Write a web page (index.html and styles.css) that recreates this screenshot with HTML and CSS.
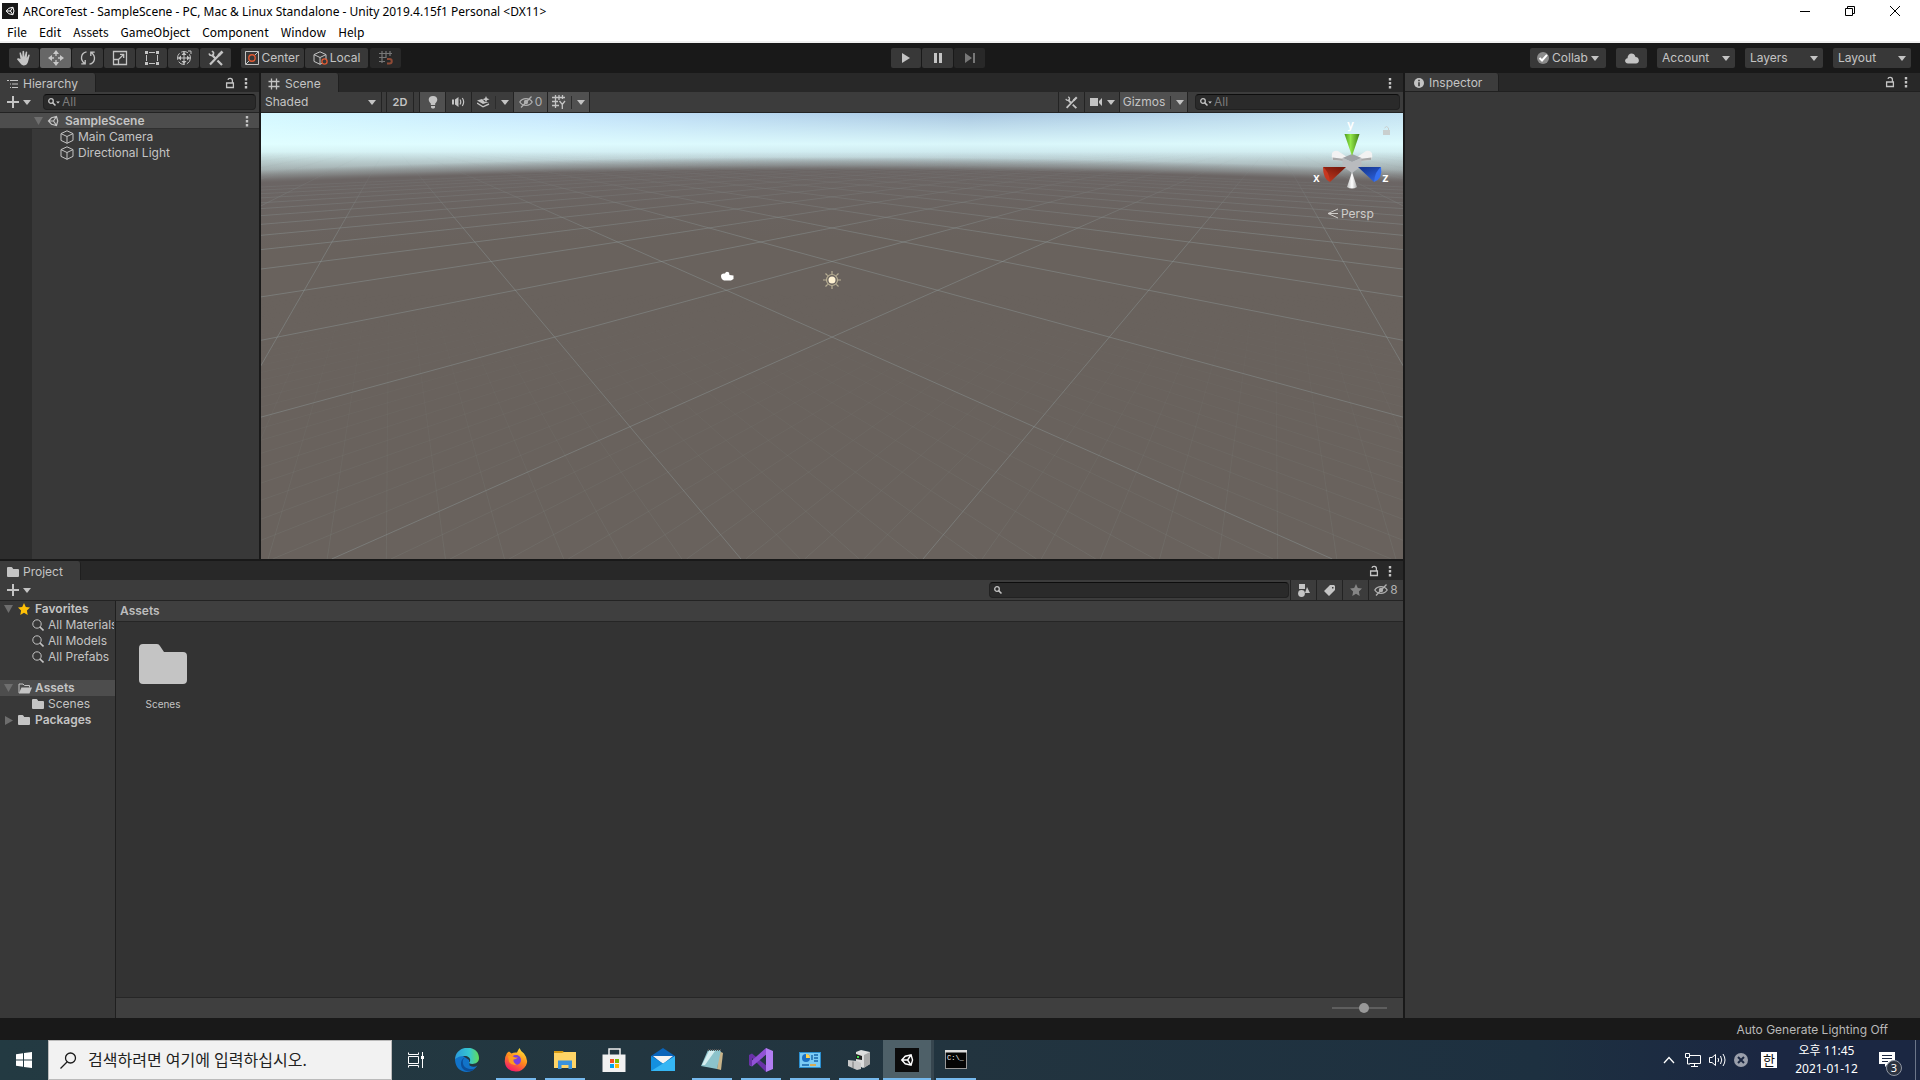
FILE: index.html
```html
<!DOCTYPE html>
<html lang="ko">
<head>
	<meta charset="UTF-8">
	<title>ARCoreTest - SampleScene</title>
	<link rel="stylesheet" href="styles.css">
</head>
<body>

	<!-- shared icons -->
	<svg class="defs" width="0" height="0">
		<symbol id="unity" viewBox="0 0 24 24"><path fill="none" stroke="currentColor" stroke-width="2.4" d="M3 12 L9 5.5 L19 3 L21.5 12 L19 21 L9 18.500 Z M3 12 H13 M13 12 L19 3 M13 12 L19 21"/></symbol>
		<symbol id="cube" viewBox="0 0 14 14"><path fill="none" stroke="currentColor" d="M7 .8 L13 3.600 V10.400 L7 13.300 L1 10.400 V3.600 Z M1 3.600 L7 6.500 L13 3.600 M7 6.500 V13.300"/></symbol>
		<symbol id="lock" viewBox="0 0 10 12"><path fill="none" stroke="currentColor" stroke-width="1.300" d="M1.600 6 H8.400 V10.500 H1.600 Z M7.400 6 V3.500 C7.400 .9 3.300 .9 3 2.800"/></symbol>
		<symbol id="kebab" viewBox="0 0 4 12"><path fill="currentColor" d="M.8 1h2.400v2.400H.8z M.8 5h2.400v2.400H.8z M.8 9h2.400v2.400H.8z"/></symbol>
		<symbol id="down" viewBox="0 0 8 5"><path fill="currentColor" d="M0 0 H8 L4 5 Z"/></symbol>
		<symbol id="plus" viewBox="0 0 12 12"><path fill="none" stroke="currentColor" stroke-width="2" d="M6 0 V12 M0 6 H12"/></symbol>
		<symbol id="find" viewBox="0 0 10 10"><circle cx="4" cy="4" r="2.300" fill="none" stroke="currentColor" stroke-width="1.300"/><path stroke="currentColor" stroke-width="1.500" d="M5.600 5.600 L8.500 8.500"/></symbol>
		<symbol id="query" viewBox="0 0 12 12"><circle cx="5" cy="5" r="4.200" fill="none" stroke="currentColor"/><path stroke="currentColor" stroke-width="1.600" d="M8 8 L11.500 11.500"/></symbol>
		<symbol id="folder" viewBox="0 0 48 40"><path fill="currentColor" d="M0 4 Q0 0 4 0 H18 Q20 0 21 2 L25 8 H44 Q48 8 48 12 V36 Q48 40 44 40 H4 Q0 40 0 36 Z"/></symbol>
		<symbol id="folder-open" viewBox="0 0 14 11"><path fill="none" stroke="currentColor" d="M1 10 V1 H5 L6.500 2.500 H11.500 V4.500"/><path fill="currentColor" d="M3.500 4.500 H14 L11.500 10.500 H.8 Z"/></symbol>
		<symbol id="star" viewBox="0 0 12 12"><path fill="currentColor" d="M6 0 L7.800 4 L12 4.500 L8.900 7.500 L9.700 12 L6 9.700 L2.300 12 L3.100 7.500 L0 4.500 L4.200 4 Z"/></symbol>
		<symbol id="eye-off" viewBox="0 0 14 12"><path fill="none" stroke="currentColor" stroke-width="1.300" d="M.8 6 C3.500 1.500 10.500 1.500 13.200 6 C10.500 10.500 3.500 10.500 .8 6 Z M12.500 .5 L2 11.500"/><circle cx="7" cy="6" r="2.200" fill="currentColor"/></symbol>
		<symbol id="tools" viewBox="0 0 16 16"><path fill="none" stroke="currentColor" stroke-width="2.200" d="M4 5 L7 8 M9.500 10.500 L14 15 M2 14.500 L12 4"/><path fill="none" stroke="currentColor" stroke-width="1.600" d="M1 3.500 C2 6.500 6 6 5.500 2.500 L4 1"/><path stroke="currentColor" stroke-width="2.600" d="M10.500 5.500 L14.500 1.500"/></symbol>
		<symbol id="hash" viewBox="0 0 12 12"><path fill="none" stroke="currentColor" stroke-width="1.300" d="M3.500 .5 V11.500 M8.500 .5 V11.500 M.5 3.500 H11.500 M.5 8.500 H11.500"/></symbol>
	</svg>

	<header class="titlebar">
		<svg class="app-icon" width="16" height="16" viewBox="0 0 16 16"><rect width="16" height="16" fill="#181818"/><use href="#unity" x="3" y="3" width="10" height="10"/></svg>
		<span class="title">ARCoreTest - SampleScene - PC, Mac &amp; Linux Standalone - Unity 2019.4.15f1 Personal &lt;DX11&gt;</span>
		<div class="window-buttons">
			<button aria-label="Minimize"><svg width="10" height="10"><path stroke="#000" d="M0 5.500 H10"/></svg></button>
			<button aria-label="Restore"><svg width="10" height="10"><path fill="none" stroke="#000" d="M.5 2.500 H7.500 V9.500 H.5 Z M2.500 2.500 V.5 H9.500 V7.500 H7.500"/></svg></button>
			<button aria-label="Close"><svg width="10" height="10"><path stroke="#000" d="M0 0 L10 10 M10 0 L0 10"/></svg></button>
		</div>
	</header>

	<nav class="menubar">
		<a href="#">File</a>
		<a href="#">Edit</a>
		<a href="#">Assets</a>
		<a href="#">GameObject</a>
		<a href="#">Component</a>
		<a href="#">Window</a>
		<a href="#">Help</a>
	</nav>

	<div class="main-toolbar">
		<div class="tool-left">
			<div class="button-strip">
				<button class="tool" aria-label="Hand"><svg width="16" height="16" viewBox="0 0 16 16"><path fill="#c4c4c4" d="M4.500 9 L3.500 3 Q4.200 1.500 5 3 L6.300 7 L6.500 1.300 Q7.300 .2 8.100 1.300 L8.500 7 L9.800 1.800 Q10.700 1 11.200 2.100 L10.800 8 L12.500 4.600 Q13.600 4 13.700 5.200 L12 12 Q10.800 15.500 7.500 15.500 Q5.500 15 4.300 13.300 L1 9.300 Q1.300 8 2.500 8.300 Z"/></svg></button>
				<button class="tool active" aria-label="Move"><svg width="16" height="16" viewBox="0 0 16 16"><path fill="none" stroke="#c8c8c8" stroke-width="1.300" d="M8 3 V6 M8 10 V13 M3 8 H6 M10 8 H13"/><path fill="#c8c8c8" d="M8 0 L11 4 H5 Z M8 16 L11 12 H5 Z M0 8 L4 5 V11 Z M16 8 L12 5 V11 Z"/></svg></button>
				<button class="tool" aria-label="Rotate"><svg width="16" height="16" viewBox="0 0 16 16"><path fill="none" stroke="#c4c4c4" stroke-width="1.300" d="M6.500 1.800 C.8 3 -.2 9.500 4.500 13.500 M1.300 13.800 H5.200 V10 M9.500 14.200 C15.200 13 16.200 6.500 11.500 2.500 M14.700 2.200 H10.800 V6"/></svg></button>
				<button class="tool" aria-label="Scale"><svg width="16" height="16" viewBox="0 0 16 16"><path fill="none" stroke="#c4c4c4" stroke-width="1.300" d="M1.500 1.500 H14.500 V14.500 H1.500 Z M1.500 9.500 H6.500 V14.500 M6.500 9.500 L11.500 4.500 M8 4.300 H11.700 V8"/></svg></button>
				<button class="tool" aria-label="Rect"><svg width="16" height="16" viewBox="0 0 16 16"><path fill="none" stroke="#c4c4c4" d="M5 2.500 H11 M5 13.500 H11 M2.500 5 V11 M13.500 5 V11"/><path fill="#c4c4c4" d="M1 1h3v3H1z M12 1h3v3h-3z M1 12h3v3H1z M12 12h3v3h-3z"/></svg></button>
				<button class="tool" aria-label="Transform"><svg width="16" height="16" viewBox="0 0 16 16"><circle cx="8" cy="8" r="6.500" fill="none" stroke="#c4c4c4" stroke-dasharray="7 2"/><path fill="none" stroke="#c4c4c4" d="M8 2 V14 M2 8 H14 M12 1 H15 V4"/><path fill="#c4c4c4" d="M8 2 L10.500 5 H5.500 Z M8 14 L10.500 11 H5.500 Z M2 8 L5 5.500 V10.500 Z M14 8 L11 5.500 V10.500 Z"/></svg></button>
				<button class="tool" aria-label="Custom tools"><svg width="16" height="16"><use href="#tools"/></svg></button>
			</div>
			<div class="button-strip">
				<button class="pivot"><svg width="14" height="14" viewBox="0 0 14 14"><path fill="none" stroke="#c4c4c4" d="M.5 .5 H13.500 V13.500 H.5 Z M1 13 L4.500 9.500 M9.500 4.500 L13 1"/><circle cx="7" cy="7" r="3.200" fill="none" stroke="#e05a33" stroke-width="1.400"/></svg>Center</button>
				<button class="pivot"><svg width="15" height="14" viewBox="0 0 15 14"><use href="#cube" width="14" height="14"/><circle cx="11.500" cy="10.500" r="2.600" fill="#383838" stroke="#e05a33" stroke-width="1.300"/></svg>Local</button>
			</div>
			<button class="tool disabled" aria-label="Grid snapping"><svg width="14" height="14" viewBox="0 0 14 14"><path fill="none" stroke="#777" stroke-width="1.200" d="M3 0 V12 M7 0 V7 M11 0 V5 M0 2.500 H13 M0 6.500 H7 M0 10.500 H6"/><path fill="none" stroke="#8f4a35" stroke-width="2" d="M8 8 H10.500 C13.500 8 13.500 12.500 10.500 12.500 H8"/></svg></button>
		</div>
		<div class="button-strip">
			<button class="tool" aria-label="Play"><svg width="10" height="10"><path fill="#c4c4c4" d="M1 0 L9 5 L1 10 Z"/></svg></button>
			<button class="tool" aria-label="Pause"><svg width="10" height="10"><path fill="#c4c4c4" d="M1 0h3v10H1z M6 0h3v10H6z"/></svg></button>
			<button class="tool disabled" aria-label="Step" disabled><svg width="10" height="10"><path fill="#777" d="M0 0 L7 5 L0 10 Z M8 0h2v10H8z"/></svg></button>
		</div>
		<div class="tool-right">
			<button class="collab"><svg width="12" height="12" viewBox="0 0 12 12"><circle cx="6" cy="6" r="6" fill="#8a8a8a"/><path fill="none" stroke="#fff" stroke-width="2" d="M2.500 6 L5 8.500 L10 2.800"/></svg>Collab<svg class="arrow" width="8" height="5"><use href="#down"/></svg></button>
			<button class="tool" aria-label="Services"><svg width="14" height="11" viewBox="0 0 14 11"><path fill="#c4c4c4" d="M3 10.500 C-.8 10.500 -.8 5.500 2.500 5.200 C2.500 -.6 9.500 -1 10.500 4 C14.800 4 15 10.500 11 10.500 Z"/></svg></button>
			<span class="select-wrap"><select aria-label="Account"><option>Account</option></select></span>
			<span class="select-wrap"><select aria-label="Layers"><option>Layers</option></select></span>
			<span class="select-wrap"><select aria-label="Layout"><option>Layout</option></select></span>
		</div>
	</div>

	<main class="workspace">
		<div class="docks">
			<div class="top-row">

				<section class="panel hierarchy">
					<div class="tabbar">
						<div class="tab hierarchy-tab"><svg width="12" height="10" viewBox="0 0 12 10"><path fill="none" stroke="currentColor" stroke-width="1.200" d="M0 1.500 H2 M3 1.500 H11 M3 5 H4 M5 5 H11 M3 8.500 H4 M5 8.500 H11"/></svg>Hierarchy</div>
						<div class="tab-tools">
							<svg width="10" height="12"><use href="#lock"/></svg>
							<svg width="4" height="12"><use href="#kebab"/></svg>
						</div>
					</div>
					<div class="bar">
						<button class="add" aria-label="Create"><svg width="12" height="12"><use href="#plus"/></svg><svg width="8" height="5"><use href="#down"/></svg></button>
						<label class="search hierarchy-search"><svg width="10" height="10"><use href="#find"/></svg><svg class="mini" width="4" height="3" viewBox="0 0 8 5"><use href="#down"/></svg><input type="text" placeholder="All" aria-label="Search hierarchy"></label>
					</div>
					<div class="scene-row">
						<svg class="fold" width="9" height="8"><path fill="#6e6e6e" d="M0 0 H9 L4.500 8 Z"/></svg>
						<svg width="12" height="12"><use href="#unity"/></svg>
						<b>SampleScene</b>
						<svg class="row-menu" width="4" height="12"><use href="#kebab"/></svg>
					</div>
					<ul class="objects">
						<li><svg width="14" height="14"><use href="#cube"/></svg>Main Camera</li>
						<li><svg width="14" height="14"><use href="#cube"/></svg>Directional Light</li>
					</ul>
				</section>

				<section class="panel scene">
					<div class="tabbar">
						<div class="tab scene-tab"><svg width="12" height="12"><use href="#hash"/></svg>Scene</div>
						<div class="tab-tools"><svg width="4" height="12"><use href="#kebab"/></svg></div>
					</div>
					<div class="bar scene-bar">
						<span class="select-wrap shading"><select aria-label="Shading mode"><option>Shaded</option></select></span>
						<button class="cell two-d">2D</button>
						<button class="cell on first" aria-label="Lighting"><svg width="10" height="13" viewBox="0 0 10 13"><path fill="currentColor" d="M5 0 C0 0 -.5 5 2.800 7.500 V9 H7.200 V7.500 C10.500 5 10 0 5 0 Z M3 10 H7 V11.500 L6 12.500 H4 L3 11.500 Z"/></svg></button>
						<button class="cell" aria-label="Audio"><svg width="13" height="10" viewBox="0 0 13 10"><path fill="currentColor" d="M0 2.500h2v5H0z M3 2.500 L6.500 0 V10 L3 7.500 Z"/><path fill="none" stroke="currentColor" stroke-width="1.200" d="M8 2.500 Q9.500 5 8 7.500 M10.300 1 Q13 5 10.300 9"/></svg></button>
						<button class="cell split" aria-label="Effects"><svg width="13" height="12" viewBox="0 0 13 12"><path fill="currentColor" d="M0 4.500 L5 3 L8 6 H12 L6 8 Z M9 0 L10 2.300 L12.500 3.300 L10 4.300 L9 6.500 L8 4.300 L5.500 3.300 L8 2.300 Z"/><path fill="none" stroke="currentColor" stroke-width="1.400" d="M0 7 L6 10.800 L12 8"/></svg><svg class="arrow" width="8" height="5"><use href="#down"/></svg></button>
						<button class="cell on hidden-count"><svg width="14" height="12"><use href="#eye-off"/></svg>0</button>
						<button class="cell on split" aria-label="Grid"><svg width="14" height="14" viewBox="0 0 14 14"><path fill="none" stroke="currentColor" stroke-width="1.300" d="M3.500 0 V13 M7 0 V5 M10.500 0 V4 M0 2.500 H13 M0 6.500 H6 M0 10.500 H7 M7.500 6 L10.300 9.500 L13 6 M10.300 9.500 V14"/></svg><svg class="arrow" width="8" height="5"><use href="#down"/></svg></button>
						<span class="push"></span>
						<button class="cell" aria-label="Component tools"><svg width="13" height="13" viewBox="0 0 16 16"><use href="#tools"/></svg></button>
						<button class="cell camera" aria-label="Scene camera"><svg width="12" height="8" viewBox="0 0 12 8"><path fill="currentColor" d="M0 0h8v8H0z M9 3 L12 0 V8 L9 5 Z"/></svg><svg width="8" height="5"><use href="#down"/></svg></button>
						<button class="cell on split gizmos">Gizmos<svg class="arrow" width="8" height="5"><use href="#down"/></svg></button>
						<label class="search scene-search"><svg width="10" height="10"><use href="#find"/></svg><svg class="mini" width="4" height="3" viewBox="0 0 8 5"><use href="#down"/></svg><input type="text" placeholder="All" aria-label="Search scene"></label>
					</div>
					<div class="viewport">
						<svg class="grid" viewBox="0 0 1142 446" preserveAspectRatio="xMidYMid slice">
							<defs>
								<linearGradient id="farFade" x1="0" y1="0" x2="0" y2="446" gradientUnits="userSpaceOnUse">
									<stop offset="0.09" stop-color="#000"/>
									<stop offset="0.15" stop-color="#444"/>
									<stop offset="0.28" stop-color="#fff"/>
								</linearGradient>
								<linearGradient id="nearFade" x1="0" y1="0" x2="0" y2="446" gradientUnits="userSpaceOnUse">
									<stop offset="0.4" stop-color="#000"/>
									<stop offset="1" stop-color="#fff"/>
								</linearGradient>
								<mask id="majorMask"><rect width="1142" height="446" fill="url(#farFade)"/></mask>
								<mask id="minorMask"><rect width="1142" height="446" fill="url(#nearFade)"/></mask>
							</defs>
							<g mask="url(#minorMask)"><path id="minorLines" fill="none" stroke="#8b9490" stroke-opacity=".18"/></g>
							<g mask="url(#majorMask)"><path id="majorLines" fill="none" stroke="#8e9898" stroke-opacity=".45"/></g>
							<!-- camera and light gizmos -->
							<path fill="#fff" d="M460 163 Q460 160 464 160.500 Q465 157.500 468 159.500 L468.500 162 L472.500 162.500 V166 L470 167.500 H463 Q460 166 460 163 Z"/>
							<g stroke="#b9b095" stroke-width="1.200" fill="none">
								<circle cx="571" cy="167" r="5.500"/>
								<path d="M571 158 V161 M571 173 V176 M562 167 H565 M577 167 H580 M564.500 160.500 L566.700 162.700 M575.300 171.300 L577.500 173.500 M564.500 173.500 L566.700 171.300 M575.300 162.700 L577.500 160.500"/>
							</g>
							<circle cx="571" cy="167" r="3.500" fill="#fff2d2"/>
						</svg>
						<svg class="orient" width="90" height="114" viewBox="0 -4 90 114">
							<defs>
								<linearGradient id="gy"><stop offset="0" stop-color="#4d9a1e"/><stop offset=".4" stop-color="#92e84a"/><stop offset="1" stop-color="#3f8016"/></linearGradient>
								<linearGradient id="gx" x1="0" y1="1" x2=".6" y2="0"><stop offset="0" stop-color="#c83a20"/><stop offset="1" stop-color="#7b1a0c"/></linearGradient>
								<linearGradient id="gz" x1="1" y1="1" x2=".4" y2="0"><stop offset="0" stop-color="#2f68e8"/><stop offset="1" stop-color="#173a96"/></linearGradient>
								<linearGradient id="gw"><stop offset="0" stop-color="#bbb"/><stop offset=".5" stop-color="#fff"/><stop offset="1" stop-color="#aaa"/></linearGradient>
							</defs>
							<path fill="#f2f2f2" d="M19 34 Q21 31 25 32 L34 38 L30 42 L20 41 Q18 38 19 34 Z M59 34 Q57 31 53 32 L44 38 L48 42 L58 41 Q60 38 59 34 Z"/>
							<path fill="#a8a8a8" d="M20 41 L19.500 38.500 L32 40 L30 42 Z M58 41 L58.500 38.500 L46 40 L48 42 Z"/>
							<path fill="#9da0a4" d="M39 35 L48.500 39 L39 43 L29.500 39 Z"/>
							<path fill="#b9bbbe" d="M29.500 39 L39 43 L48.500 39 V47 L39 54 L29.500 47 Z"/>
							<path fill="url(#gy)" d="M31.500 15 H46.500 L39 37 Z"/>
							<path fill="url(#gx)" d="M10 48 H33 L17 63 Z"/><path fill="#c8371f" d="M10 48 Q16 52 17 63 Q10 60 10 48 Z"/>
							<path fill="url(#gz)" d="M68 48 H45 L61 63 Z"/><path fill="#3470f0" d="M68 48 Q62 52 61 63 Q70 60 68 48 Z"/>
							<path fill="url(#gw)" d="M39 53 L44 68 Q39 71 34 68 Z"/>
							<text x="34" y="10">y</text>
							<text x="0" y="63">x</text>
							<text x="69" y="63">z</text>
							<path fill="#c9cfce" d="M70 11 H77 V16 H70 Z"/><path fill="none" stroke="#c9cfce" d="M75.500 11 V9 Q73.500 6 71.500 9"/>
							<path fill="none" stroke="#cfcdca" d="M25 90 L15 94.500 L25 99 M15 94.500 H25"/>
							<text class="persp" x="28" y="99">Persp</text>
						</svg>
					</div>
				</section>
			</div>

			<section class="panel project">
				<div class="tabbar">
					<div class="tab project-tab"><svg width="12" height="10"><use href="#folder"/></svg>Project</div>
					<div class="tab-tools">
						<svg width="10" height="12"><use href="#lock"/></svg>
						<svg width="4" height="12"><use href="#kebab"/></svg>
					</div>
				</div>
				<div class="bar">
					<button class="add" aria-label="Create"><svg width="12" height="12"><use href="#plus"/></svg><svg width="8" height="5"><use href="#down"/></svg></button>
					<span class="push"></span>
					<label class="search project-search"><svg width="10" height="10"><use href="#find"/></svg><input type="text" aria-label="Search project"></label>
					<button class="cell first" aria-label="Search by type"><svg width="12" height="13" viewBox="0 0 12 13"><path fill="currentColor" d="M1 0h6v5H1z M9 3 L12 9 H7 Z"/><circle cx="3.500" cy="9.500" r="3.400" fill="currentColor"/></svg></button>
					<button class="cell" aria-label="Search by label"><svg width="11" height="11" viewBox="0 0 11 11"><path fill="currentColor" fill-rule="evenodd" d="M6 0 H10 L11 1 V5 L5 11 L0 6 Z M8 2 V3.500 H9.500 V2 Z"/></svg></button>
					<button class="cell dim" aria-label="Save search"><svg width="12" height="12"><use href="#star"/></svg></button>
					<button class="cell hidden-count"><svg width="14" height="12"><use href="#eye-off"/></svg>8</button>
				</div>
				<div class="project-body">
					<ul class="tree">
						<li class="root"><svg class="fold" width="9" height="8"><path fill="#6e6e6e" d="M0 0 H9 L4.500 8 Z"/></svg><svg class="gold" width="12" height="12"><use href="#star"/></svg><b>Favorites</b></li>
						<li class="child"><svg width="12" height="12"><use href="#query"/></svg>All Materials</li>
						<li class="child"><svg width="12" height="12"><use href="#query"/></svg>All Models</li>
						<li class="child"><svg width="12" height="12"><use href="#query"/></svg>All Prefabs</li>
						<li class="root selected"><svg class="fold" width="9" height="8"><path fill="#6e6e6e" d="M0 0 H9 L4.500 8 Z"/></svg><svg width="14" height="11"><use href="#folder-open"/></svg><b>Assets</b></li>
						<li class="child"><svg width="12" height="10"><use href="#folder"/></svg>Scenes</li>
						<li class="root"><svg class="fold" width="9" height="9"><path fill="#6e6e6e" d="M1 0 L9 4.500 L1 9 Z"/></svg><svg width="12" height="10"><use href="#folder"/></svg><b>Packages</b></li>
					</ul>
					<div class="assets">
						<div class="breadcrumb">Assets</div>
						<div class="asset-grid">
							<figure>
								<svg width="48" height="40"><use href="#folder"/></svg>
								<figcaption>Scenes</figcaption>
							</figure>
						</div>
						<div class="asset-footer"><input type="range" min="0" max="100" value="60" aria-label="Icon size"></div>
					</div>
				</div>
			</section>
		</div>

		<section class="panel inspector">
			<div class="tabbar">
				<div class="tab inspector-tab"><svg width="10" height="10" viewBox="0 0 10 10"><circle cx="5" cy="5" r="5" fill="currentColor"/><path stroke="#3c3c3c" stroke-width="1.600" d="M5 1.800 V3.300 M5 4.200 V8.200"/></svg>Inspector</div>
				<div class="tab-tools">
					<svg width="10" height="12"><use href="#lock"/></svg>
					<svg width="4" height="12"><use href="#kebab"/></svg>
				</div>
			</div>
		</section>
	</main>

	<div class="statusbar">Auto Generate Lighting Off</div>

	<footer class="taskbar">
		<button class="start" aria-label="Start"><svg width="16" height="16" viewBox="0 0 16 16"><path fill="#fff" d="M0 2.200 L7 1.200 V7.500 H0 Z M8 1 L16 0 V7.500 H8 Z M0 8.500 H7 V14.800 L0 13.800 Z M8 8.500 H16 V16 L8 15 Z"/></svg></button>
		<label class="task-search"><svg width="17" height="17" viewBox="0 0 17 17"><circle cx="10.500" cy="6" r="5" fill="none" stroke="#1b1b1b" stroke-width="1.300"/><path stroke="#1b1b1b" stroke-width="1.300" d="M7 10 L.5 16.500"/></svg><input type="text" placeholder="검색하려면 여기에 입력하십시오." aria-label="검색"></label>
		<button class="task task-view" aria-label="Task view"><svg width="16" height="16" viewBox="0 0 16 16"><path fill="none" stroke="#fff" d="M.5 .5 V2.500 H10.500 V.5 M.5 4.500 H10.500 V11.500 H.5 Z M.5 15.500 V13.500 H10.500 V15.500 M14.500 0 V16"/><path fill="#fff" d="M13 4h3v3h-3z"/></svg></button>
		<button class="task" aria-label="Edge"><svg width="24" height="24" viewBox="0 0 24 24">
			<defs>
				<linearGradient id="edgeTop"><stop offset="0" stop-color="#2a9bdc"/><stop offset=".6" stop-color="#36c6d0"/><stop offset="1" stop-color="#62dc58"/></linearGradient>
			</defs>
			<path fill="#1173c9" d="M0 12 Q1 7 8 8 L14 12 L14.500 17.500 Q19 20 22.500 17.500 Q18 24 12 24 Q1 23.500 0 12 Z"/>
			<path fill="url(#edgeTop)" d="M0 12 C0 -4 24 -4 24 10 C24 16 17 17 14 15 C17 11.500 14 8 10 8 C5 8 1 9.500 0 12 Z"/>
			<path fill="#0c4f9a" d="M8 12 C6.500 19 13 22.500 20 20.500 C15 26 6 23 6 16 C6 12 8 10 11 9 Q8.500 10 8 12 Z"/>
		</svg></button>
		<button class="task open" aria-label="Firefox"><svg width="24" height="24" viewBox="0 0 24 24">
			<defs><linearGradient id="fox" x1=".8" y1="0" x2=".3" y2="1"><stop offset="0" stop-color="#ffe83b"/><stop offset=".5" stop-color="#ff8a1c"/><stop offset="1" stop-color="#f5156c"/></linearGradient></defs>
			<path fill="url(#fox)" d="M3 5 L5 3.500 L7.500 5.500 Q10 4 13 4.500 Q14 2 15.500 0 Q17 4 20 5.500 Q25 12 22 17.500 Q18 24 11.500 23.500 Q2 23 .8 14 Q.5 9 3 5 Z"/>
			<circle cx="12" cy="12" r="5" fill="#7a3ee0"/>
			<path fill="#ff9a20" d="M4 8 Q8 7 11 9.500 L14 9.500 Q12 11.500 9.500 11.500 Q9 15 13 16.500 Q8 18 5 14 Z"/>
		</svg></button>
		<button class="task open" aria-label="File Explorer"><svg width="24" height="24" viewBox="0 0 24 24"><path fill="#d79a12" d="M1 3 H10 L12 6 H1 Z"/><path fill="#ffd466" d="M1 5 H9 L11 4 H23 V20 H1 Z"/><path fill="#3a92dc" d="M5 12.500 H19 V21 H15.500 V17 H8.500 V21 H5 Z"/></svg></button>
		<button class="task" aria-label="Store"><svg width="24" height="24" viewBox="0 0 24 24"><path fill="none" stroke="#eee" stroke-width="1.500" d="M7 7 V1 H18 V7"/><path fill="#f1f1f1" d="M.5 6.500 H23.500 V24 H.5 Z"/><path fill="#f25022" d="M8 11h4v4H8z"/><path fill="#7fba00" d="M13 11h4v4h-4z"/><path fill="#00a4ef" d="M8 16h4v4H8z"/><path fill="#ffb900" d="M13 16h4v4h-4z"/></svg></button>
		<button class="task" aria-label="Mail"><svg width="24" height="24" viewBox="0 0 24 24"><path fill="#0a64ba" d="M0 8 L12 0 L24 8 V14 H0 Z"/><path fill="#f3f3f3" d="M2 8 H22 L12 16 Z"/><path fill="#1490df" d="M0 8 L24 23 H0 Z"/><path fill="#35b6f4" d="M24 8 L0 23 H24 Z"/></svg></button>
		<button class="task open" aria-label="Notepad"><svg width="24" height="24" viewBox="0 0 24 24"><path fill="#c8b48a" d="M19 3 L23 5 L21 22 L17 21 Z"/><path fill="#8cc3cb" d="M8 2 H21 L17 21 L1 18 Z"/><path fill="#d6eef0" d="M9 3 H15 L5 17 L2 17 Z"/><path stroke="#555" stroke-dasharray="1 1" stroke-width="2" d="M8 2 H21"/></svg></button>
		<button class="task open" aria-label="Visual Studio"><svg width="24" height="24" viewBox="0 0 24 24"><path fill="#6a31a8" d="M0 7 L3 5.500 L19 19 L17 24 Z"/><path fill="#9152d6" d="M0 17 L3 18.500 L19 5 L17 0 L0 15 Z"/><path fill="#6a31a8" d="M0 7 H3 V18 L0 17 Z"/><path fill="#b27df2" d="M17 0 L24 3 V21 L17 24 Z"/></svg></button>
		<button class="task open" aria-label="Control Panel"><svg width="24" height="24" viewBox="0 0 24 24"><rect x="1.500" y="4.500" width="21" height="15" fill="#7bcbf5" stroke="#2b8fd0"/><circle cx="8" cy="10" r="4" fill="#1b6fc2"/><path fill="#ffd04a" d="M8 10 V6 A4 4 0 0 1 12 10 Z"/><path stroke="#1764a8" stroke-width="1.400" fill="none" d="M14 7 V12 M16 7 H20 M16 10 H20 M16 13 H20 M4 17 H11"/><path stroke="#f5a020" stroke-width="1.500" d="M12 17 H18"/></svg></button>
		<button class="task open" aria-label="Device Manager"><svg width="24" height="24" viewBox="0 0 24 24"><path fill="#ddd" d="M9 4 L14 2 L23 4 V16 L16 20 L9 16 Z"/><path fill="#a9a9a9" d="M17 7 L23 4 V16 L17 20 Z"/><path fill="#222" d="M9 6 L15 8 V12 L9 11 Z"/><path fill="#3edc50" d="M10 8h2v2h-2z"/><path fill="#c9c9c9" d="M1 12 L10 13 L14 15 V21 L10 22 L1 18 Z"/><path stroke="#777" d="M6 13.500 V20"/></svg></button>
		<button class="task open current" aria-label="Unity"><svg width="24" height="24" viewBox="0 0 24 24"><rect width="24" height="24" fill="#0c0c0c"/><use href="#unity" x="5" y="5" width="14" height="14"/></svg></button>
		<button class="task open" aria-label="Command Prompt"><svg width="24" height="24" viewBox="0 0 24 24"><rect x="1.500" y="2.500" width="21" height="18" fill="#050505" stroke="#999"/><path fill="#ddd" d="M1 2h22v2.500H1z"/><text class="prompt" x="3" y="12">C:\_</text></svg></button>

		<div class="tray">
			<button aria-label="Hidden icons"><svg width="12" height="8"><path fill="none" stroke="#fff" stroke-width="1.300" d="M1 7 L6 1.500 L11 7"/></svg></button>
			<button aria-label="Network"><svg width="16" height="14" viewBox="0 0 16 14"><path fill="none" stroke="#fff" d="M4.500 2.500 H15.500 V10.500 H4.500 M9.500 10.500 V13.500 M6 13.500 H13 M.5 .5 H4.500 V4.500 H.5 Z M2.500 5 V11 H5"/></svg></button>
			<button aria-label="Volume"><svg width="17" height="14" viewBox="0 0 17 14"><path fill="none" stroke="#fff" d="M.5 4.500 H3 L6.500 1.500 V12.500 L3 9.500 H.5 Z M9 5 Q10.300 7 9 9 M11.500 3 Q14 7 11.500 11 M14 1 Q18 7 14 13"/></svg></button>
			<button aria-label="Offline"><svg width="14" height="14" viewBox="0 0 14 14"><circle cx="7" cy="7" r="7" fill="#9a9fab"/><path stroke="#1c2842" stroke-width="2" d="M4 4 L10 10 M10 4 L4 10"/></svg></button>
			<button class="ime">한</button>
			<div class="clock"><span>오후 11:45</span><span>2021-01-12</span></div>
			<button class="notify" aria-label="Notifications"><svg width="16" height="16" viewBox="0 0 16 16"><path fill="#fff" d="M0 0 H16 V12 H9 L6 15 V12 H0 Z"/><path stroke="#1c2842" d="M3 3.500 H13 M3 6.500 H13 M3 9.500 H9"/></svg><span class="count">3</span></button>
		</div>
	</footer>

	<script>
		// ground grid: two families of lines that meet on the horizon
		var horizon = 28, bottom = 446, center = 571, spread = 442;

		function gridPath(from, to, step) {
			var d = '';
			for (var n = from; n <= to; n++) {
				if (step < 0.003 && n % 10 == 0) continue;
				var run = (bottom - horizon) * spread * (0.0051 + n * step);
				d += 'M' + (center - spread) + ' ' + horizon + 'L' + (center - spread + run).toFixed(1) + ' ' + bottom;
				d += 'M' + (center + spread) + ' ' + horizon + 'L' + (center + spread - run).toFixed(1) + ' ' + bottom;
			}
			return d;
		}

		document.getElementById('majorLines').setAttribute('d', gridPath(-8, 14, 0.0032));
		document.getElementById('minorLines').setAttribute('d', gridPath(-50, 30, 0.00032));
	</script>
</body>
</html>
```
FILE: styles.css
```css
* {
	box-sizing: border-box;
}

body {
	margin: 0;
	height: 100vh;
	display: flex;
	flex-direction: column;
	overflow: hidden;
	background: #191919;
	color: #c4c4c4;
	font: 12px/16px Inter, "Liberation Sans", sans-serif;
}

svg {
	display: block;
	flex: none;
}

.defs {
	position: absolute;
}

ul, figure {
	margin: 0;
	padding: 0;
	list-style: none;
}

button, input, select {
	margin: 0;
	padding: 0;
	border: 0;
	background: none;
	color: inherit;
	font: inherit;
}

button {
	display: flex;
	align-items: center;
	justify-content: center;
}

select {
	appearance: none;
	width: 100%;
	height: 100%;
}

.push {
	flex: 1;
}

/* window frame */
.titlebar {
	display: flex;
	align-items: center;
	height: 22px;
	padding-left: 2px;
	background: #fff;
	color: #000;
	font-family: "Noto Sans", "Noto Sans CJK KR", sans-serif;
}

.app-icon {
	color: #fff;
}

.title {
	margin-left: 5px;
	padding-top: 2px;
}

.window-buttons {
	display: flex;
	margin-left: auto;
	padding-right: 3px;
}

.window-buttons button {
	width: 45px;
	height: 20px;
}

.menubar {
	display: flex;
	gap: 12px;
	height: 21px;
	padding: 2px 7px 0;
	background: #fff;
	border-bottom: 2px solid #f0f0f0;
	font-family: "Noto Sans CJK KR", "Noto Sans", sans-serif;
}

.menubar a {
	color: #000;
	text-decoration: none;
}

/* main toolbar */
.main-toolbar {
	display: grid;
	grid-template-columns: 882fr auto 925fr;
	align-items: center;
	height: 30px;
	padding: 0 9px;
}

.tool-left, .tool-right {
	display: flex;
	gap: 10px;
}

.tool-left .disabled {
	margin-left: -8px;
}

.tool-right {
	justify-content: flex-end;
}

.button-strip {
	display: flex;
	gap: 1px;
}

.tool, .pivot, .collab {
	height: 20px;
	background: #383838;
	border-radius: 2px;
}

.tool {
	width: 31px;
}

.button-strip .tool:first-child {
	width: 30px;
}

.tool.active {
	background: #676767;
}

.tool.disabled {
	background: #282828;
}

.pivot {
	width: 63px;
	gap: 2px;
}

.collab {
	width: 76px;
	gap: 3px;
}

.select-wrap {
	position: relative;
	width: 78px;
	height: 20px;
	padding-left: 5px;
	background: #383838;
	border-radius: 2px;
}

.select-wrap::after {
	content: "";
	position: absolute;
	right: 5px;
	top: 8px;
	border: 4px solid transparent;
	border-top: 5px solid #c4c4c4;
	border-bottom: 0;
	pointer-events: none;
}

/* docked panels */
.workspace {
	flex: 1;
	display: flex;
	gap: 2px;
	min-height: 0;
}

.docks {
	flex: 1;
	display: flex;
	flex-direction: column;
	gap: 2px;
	min-width: 0;
}

.top-row {
	flex: 486 1 0;
	display: flex;
	gap: 2px;
	min-height: 0;
}

.panel {
	display: flex;
	flex-direction: column;
	min-width: 0;
	min-height: 0;
	background: #383838;
}

.hierarchy {
	width: 259px;
}

.scene {
	flex: 1;
}

.project {
	flex: 457 1 0;
}

.inspector {
	width: 515px;
}

.tabbar {
	display: flex;
	justify-content: space-between;
	height: 19px;
	background: #282828;
}

.tab {
	display: flex;
	align-items: center;
	gap: 4px;
	padding: 2px 0 0 7px;
	background: #3c3c3c;
	border-right: 1px solid #1f1f1f;
	border-radius: 0 3px 0 0;
}

.hierarchy-tab {
	width: 96px;
}

.scene-tab {
	width: 78px;
	gap: 5px;
}

.inspector-tab {
	width: 94px;
	padding-left: 9px;
	gap: 5px;
}

.project-tab {
	width: 81px;
}

.tab-tools {
	display: flex;
	align-items: center;
	gap: 9px;
	padding-right: 11px;
}

.inspector .tabbar {
	border-bottom: 1px solid #202020;
}

.inspector .tab-tools {
	padding-right: 12px;
}

.bar {
	display: flex;
	align-items: center;
	height: 21px;
	background: #3c3c3c;
	border-bottom: 1px solid #232323;
}

.add {
	gap: 4px;
	padding-left: 7px;
}

.search {
	display: flex;
	align-items: center;
	height: 16px;
	padding-left: 3px;
	background: #2a2a2a;
	border: 1px solid #212121;
	border-top-color: #0d0d0d;
	border-radius: 4px;
}

.search .mini {
	margin-left: -1px;
}

.search input {
	flex: 1;
	min-width: 0;
	line-height: 14px;
	outline: 0;
}

.search .mini + input {
	padding-left: 2px;
}

.search input::placeholder {
	color: #7c7c7c;
}

.hierarchy-search {
	flex: 1;
	margin: 0 3px 0 12px;
}

.scene-search {
	width: 205px;
	margin: 0 3px 0 7px;
}

.project-search {
	width: 300px;
	margin-right: 1px;
}

.shading {
	width: 121px;
	padding-left: 4px;
	background: none;
	border-right: 1px solid #232323;
	border-radius: 0;
}

.cell {
	width: 26px;
	height: 20px;
	border-right: 1px solid #232323;
}

.cell.on {
	background: #505050;
}

.cell.first {
	width: 27px;
	border-left: 1px solid #232323;
}

.two-d {
	width: 28px;
	margin-left: 4px;
	margin-right: 5px;
	border-left: 1px solid #232323;
	font-weight: 600;
	font-size: 11px;
}

.split {
	width: 42px;
	gap: 5px;
}

.split .arrow {
	box-sizing: content-box;
	padding: 4px 0 4px 5px;
	border-left: 1px solid #2c2c2c;
}

.hidden-count {
	width: 34px;
	gap: 2px;
	color: #b0b0b0;
}

.push + .cell {
	width: 27px;
	border-left: 1px solid #232323;
}

.camera {
	width: 35px;
	gap: 5px;
}

.gizmos {
	width: 68px;
}

.dim {
	color: #858585;
}

.project .hidden-count {
	border-right: 0;
}

/* hierarchy */
.scene-row {
	display: flex;
	align-items: center;
	height: 16px;
	padding: 0 10px 0 34px;
	background: #4d4d4d;
	border-bottom: 1px solid #303030;
}

.scene-row b {
	margin-left: 6px;
}

.fold {
	margin-right: 4px;
}

.row-menu {
	margin-left: auto;
}

b, .breadcrumb {
	font-weight: 600;
}

.objects {
	flex: 1;
	border-left: 32px solid #2d2d2d;
	padding-left: 28px;
}

.objects li, .tree li {
	display: flex;
	align-items: center;
	gap: 4px;
	height: 16px;
	white-space: nowrap;
}

/* scene view */
.viewport {
	position: relative;
	flex: 1;
	min-height: 0;
	overflow: hidden;
	background:
		radial-gradient(circle 12600px at 50% 12556px, #69625d 0, #69625d 12430px, #6b6564 12499px, rgba(107, 101, 100, .5) 12504px, rgba(107, 101, 100, 0) 12512px),
		linear-gradient(transparent 39px, rgba(107, 101, 100, .25) 48px, rgba(107, 101, 100, .55) 60px, #6b6564 74px),
		linear-gradient(transparent 0, rgba(226, 255, 255, .85) 31px, rgba(214, 240, 240, .8) 40px),
		linear-gradient(to right, #d4f8ff 0, #c6e6fd 25%, #a8c6e0 62%, #c4e2f2 100%);
}

.grid {
	width: 100%;
	height: 100%;
}

.orient {
	position: absolute;
	top: 2px;
	right: 0;
	fill: #fff;
	font-weight: 600;
}

.persp {
	fill: #cfcdca;
	font-weight: 400;
}

/* project */
.project-body {
	flex: 1;
	display: flex;
	min-height: 0;
}

.tree {
	width: 116px;
	border-right: 1px solid #1f1f1f;
	overflow: hidden;
}

.tree .root {
	gap: 5px;
	padding-left: 4px;
}

.tree .root .fold {
	margin-right: 0;
}

.tree .child {
	padding-left: 32px;
	margin-right: 1px;
	overflow: hidden;
}

.tree .selected {
	margin-top: 15px;
	background: #4d4d4d;
}

.tree .selected svg + b {
	margin-left: -2px;
}

.gold {
	color: #ffc107;
}

.assets {
	flex: 1;
	display: flex;
	flex-direction: column;
	background: #333;
}

.breadcrumb {
	height: 21px;
	padding: 2px 4px;
	background: #3f3f3f;
	border-bottom: 1px solid #262626;
	color: #bdbdbd;
}

.asset-grid {
	flex: 1;
	padding: 22px 23px;
}

figure {
	width: 48px;
	font-size: 10px;
	text-align: center;
}

figcaption {
	margin-top: 12px;
}

.asset-footer {
	display: flex;
	justify-content: flex-end;
	align-items: center;
	height: 21px;
	padding-right: 16px;
	background: #3f3f3f;
	border-top: 1px solid #262626;
}

input[type="range"] {
	appearance: none;
	width: 55px;
	height: 2px;
	background: #5e5e5e;
}

input[type="range"]::-webkit-slider-thumb {
	appearance: none;
	width: 10px;
	height: 10px;
	border-radius: 50%;
	background: #999;
}

.statusbar {
	height: 22px;
	padding: 4px 32px 0;
	color: #b8b8b8;
	text-align: right;
}

/* windows taskbar */
.taskbar {
	display: flex;
	height: 40px;
	background: linear-gradient(to right, #233a42 0, #22343f 50%, #1d3040 80%, #1b2742 92%);
	color: #fff;
	font-family: "Noto Sans", "Noto Sans CJK KR", sans-serif;
}

.start {
	width: 48px;
}

.task-search {
	display: flex;
	align-items: center;
	width: 344px;
	padding-left: 11px;
	background: #f2f2f2;
	border: 1px solid #bbb;
}

.task-search input {
	flex: 1;
	padding-left: 11px;
	font-size: 16px;
	line-height: 24px;
	outline: 0;
}

.task-search input::placeholder {
	color: #222;
}

.task {
	width: 40px;
	margin: 0 4px;
	padding-top: 2px;
	border-bottom: 2px solid transparent;
}

.task + .task {
	margin-left: 5px;
}

.task.task-view {
	margin-right: 6px;
}

.open {
	border-bottom-color: #76b9ed;
}

.task + .current {
	width: 48px;
	margin: 0;
	background: #4e6068;
	box-shadow: 3px 0 #37464f;
}

.prompt {
	fill: #fff;
	font: 7px "Liberation Mono", monospace;
}

.tray {
	display: flex;
	align-items: center;
	margin-left: auto;
	padding-right: 8px;
	border-right: 1px solid #6c7689;
	margin-right: 4px;
}

.tray > button {
	width: 24px;
	height: 40px;
}

.tray .ime {
	width: 16px;
	height: 16px;
	margin: 0 9px 0 8px;
	background: #fff;
	color: #111;
	font-size: 13px;
	line-height: 16px;
}

.clock {
	display: flex;
	flex-direction: column;
	width: 81px;
	text-align: center;
	line-height: 18px;
}

.tray .notify {
	position: relative;
	width: 40px;
}

.count {
	position: absolute;
	right: 5px;
	bottom: 4px;
	width: 16px;
	height: 16px;
	border: 1px solid #8f96a3;
	border-radius: 50%;
	background: #2b3240;
	font-size: 11px;
	line-height: 14px;
}
```
